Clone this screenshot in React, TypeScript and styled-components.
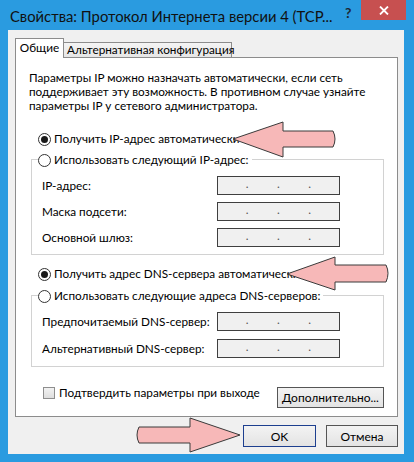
import React from 'react';
import styled, { createGlobalStyle } from 'styled-components';

const Global = createGlobalStyle`
  html, body { margin: 0; padding: 0; background: #2a9be0; }
  body { width: 414px; height: 462px; overflow: hidden; }
  * { box-sizing: border-box; }
`;

const Window = styled.div`
  position: relative;
  width: 414px;
  height: 462px;
  background: #2a9be0;
  display: flex;
  flex-direction: column;
  font-family: Lato, "Liberation Sans", sans-serif;
  font-size: 11.75px;
  color: #000;
`;

const TitleBar = styled.div`
  height: 30px;
  display: flex;
  align-items: flex-start;
  flex-shrink: 0;
`;

const Title = styled.div`
  flex: 1;
  padding: 7px 0 0 10px;
  font-size: 14.8px;
  line-height: 18px;
  color: #111;
  white-space: nowrap;
  overflow: hidden;
`;

const Help = styled.div`
  width: 16px;
  margin-top: 5px;
  font-size: 14px;
  font-weight: 700;
  line-height: 16px;
  color: #1c2733;
`;

const CloseButton = styled.div`
  width: 45px;
  height: 20px;
  margin-right: 8px;
  background: #c75050;
  display: flex;
  align-items: center;
  justify-content: center;
`;

const Client = styled.div`
  flex: 1;
  margin: 0 10px 8px 8px;
  background: #f0f0f0;
  display: flex;
  flex-direction: column;
  padding: 8px 6px 7px 7px;
`;

const TabStrip = styled.div`
  display: flex;
  align-items: flex-end;
  height: 19px;
  position: relative;
  z-index: 1;
`;

const Tab = styled.div<{ $active?: boolean }>`
  border: 1px solid #8c8c8c;
  border-bottom: none;
  white-space: nowrap;
  line-height: 14px;
  ${p => p.$active ? `
    width: 49px;
    height: 20px;
    margin-bottom: -1px;
    background: #fff;
    text-align: center;
    padding-top: 2px;
  ` : `
    width: 168px;
    height: 15px;
    border-left: none;
    background: linear-gradient(#f4f4f4, #e6e6e6);
    padding-left: 3px;
  `}
`;

const Panel = styled.div`
  height: 360px;
  border: 1px solid #8c8c8c;
  background: #fff;
  padding: 13px 13px 0 13px;
  display: flex;
  flex-direction: column;
`;

const Description = styled.div`
  line-height: 14px;
  white-space: nowrap;
`;

const RadioRow = styled.label<{ $top?: number; $indent?: boolean }>`
  display: flex;
  align-items: center;
  gap: 3px;
  height: 16px;
  line-height: 16px;
  margin-top: ${p => p.$top ?? 0}px;
  margin-left: ${p => (p.$indent ? 9 : 0)}px;
  white-space: nowrap;
`;

const RadioCircle = styled.span<{ $checked?: boolean }>`
  width: 13px;
  height: 13px;
  border-radius: 50%;
  border: 1px solid #333;
  background: #fff;
  display: flex;
  align-items: center;
  justify-content: center;
  flex-shrink: 0;
  &::after {
    content: '';
    width: 7px;
    height: 7px;
    border-radius: 50%;
    background: #1a1a1a;
    display: ${p => (p.$checked ? 'block' : 'none')};
  }
`;

const GroupBox = styled.div<{ $top: number; $gap: number; $bottom: number }>`
  border: 1px solid #d2d2d2;
  margin: ${p => p.$top}px 0 0 2px;
  padding: 0 0 ${p => p.$bottom}px 10px;
  --row-gap: ${p => p.$gap}px;
`;

const GroupHeader = styled.div`
  display: flex;
  width: fit-content;
  height: 16px;
  background: #fff;
  margin: -8px 0 0 -4px;
  padding-right: 3px;
`;

const FieldGrid = styled.div`
  display: grid;
  grid-template-columns: 175px 123px;
  row-gap: var(--row-gap);
  align-items: center;
  margin-top: 8px;
`;

const FieldLabel = styled.div`
  white-space: nowrap;
  line-height: 14px;
`;

const IpBox = styled.div`
  height: 19px;
  border: 1px solid #3f3f3f;
  background: #f0f0f0;
  display: grid;
  grid-template-columns: 1fr 4px 1fr 4px 1fr 4px 1fr;
  align-items: center;
  color: #555;
  line-height: 12px;
`;

const IpDot = styled.span`
  text-align: center;
  margin-top: -4px;
`;

const BottomRow = styled.div`
  display: flex;
  align-items: center;
  justify-content: space-between;
  margin-top: 18px;
`;

const CheckRow = styled.label`
  display: flex;
  align-items: center;
  gap: 4px;
  margin: 0 0 9px 14px;
  white-space: nowrap;
`;

const CheckBox = styled.span`
  width: 12px;
  height: 12px;
  border: 1px solid #8e8e8e;
  background: linear-gradient(#f2f2f2, #dedede);
  flex-shrink: 0;
`;

const Button = styled.div<{ $w: number; $h: number; $default?: boolean }>`
  width: ${p => p.$w}px;
  height: ${p => p.$h}px;
  border: 1px solid ${p => (p.$default ? '#1d3f8f' : '#555')};
  background: linear-gradient(#f3f3f3, #e3e3e3);
  display: flex;
  align-items: center;
  justify-content: center;
  white-space: nowrap;
  font-size: 12px;
`;

const ButtonBar = styled.div`
  display: flex;
  justify-content: flex-end;
  gap: 10px;
  margin-top: 8px;
`;

const ArrowLayer = styled.svg`
  position: absolute;
  left: 0;
  top: 0;
  width: 414px;
  height: 462px;
  pointer-events: none;
`;

const Ip = () => (
  <IpBox>
    <span />
    <IpDot>.</IpDot>
    <span />
    <IpDot>.</IpDot>
    <span />
    <IpDot>.</IpDot>
    <span />
  </IpBox>
);

export default function App() {
  return (
    <>
      <Global />
      <Window>
        <TitleBar>
          <Title>Свойства: Протокол Интернета версии 4 (TCP...</Title>
          <Help>?</Help>
          <CloseButton>
            <svg width="10" height="9" viewBox="0 0 10 9">
              <path d="M1 0.5 L9 8.5 M9 0.5 L1 8.5" stroke="#fff" strokeWidth="1.8" />
            </svg>
          </CloseButton>
        </TitleBar>
        <Client>
          <TabStrip>
            <Tab $active>Общие</Tab>
            <Tab>Альтернативная конфигурация</Tab>
          </TabStrip>
          <Panel>
            <Description>
              Параметры IP можно назначать автоматически, если сеть<br />
              поддерживает эту возможность. В противном случае узнайте<br />
              параметры IP у сетевого администратора.
            </Description>
            <RadioRow $top={18} $indent>
              <RadioCircle $checked />
              Получить IP-адрес автоматически
            </RadioRow>
            <GroupBox $top={12} $gap={7} $bottom={7}>
              <GroupHeader>
                <RadioRow>
                  <RadioCircle />
                  Использовать следующий IP-адрес:
                </RadioRow>
              </GroupHeader>
              <FieldGrid>
                <FieldLabel>IP-адрес:</FieldLabel>
                <Ip />
                <FieldLabel>Маска подсети:</FieldLabel>
                <Ip />
                <FieldLabel>Основной шлюз:</FieldLabel>
                <Ip />
              </FieldGrid>
            </GroupBox>
            <RadioRow $top={11} $indent>
              <RadioCircle $checked />
              Получить адрес DNS-сервера автоматически
            </RadioRow>
            <GroupBox $top={13} $gap={8} $bottom={8}>
              <GroupHeader>
                <RadioRow>
                  <RadioCircle />
                  Использовать следующие адреса DNS-серверов:
                </RadioRow>
              </GroupHeader>
              <FieldGrid>
                <FieldLabel>Предпочитаемый DNS-сервер:</FieldLabel>
                <Ip />
                <FieldLabel>Альтернативный DNS-сервер:</FieldLabel>
                <Ip />
              </FieldGrid>
            </GroupBox>
            <BottomRow>
              <CheckRow>
                <CheckBox />
                Подтвердить параметры при выходе
              </CheckRow>
              <Button $w={107} $h={21}>Дополнительно...</Button>
            </BottomRow>
          </Panel>
          <ButtonBar>
            <Button $w={73} $h={22} $default>OK</Button>
            <Button $w={72} $h={22}>Отмена</Button>
          </ButtonBar>
        </Client>
        <ArrowLayer viewBox="0 0 414 462">
          <g fill="#f7b8b8" stroke="#3a3a3a" strokeWidth="1" strokeLinejoin="miter">
            <path d="M233,139 L283,122 L283,131 L333,131 Q337,139 333,147 L283,147 L283,157 Z" />
            <path d="M287,274 L335,257 L335,265 L386,265 Q390,273 386,282 L335,282 L335,290 Z" />
            <path d="M240,435 L190,418 L190,427 L139,427 Q135,435 139,443 L190,443 L190,452 Z" />
          </g>
        </ArrowLayer>
      </Window>
    </>
  );
}
